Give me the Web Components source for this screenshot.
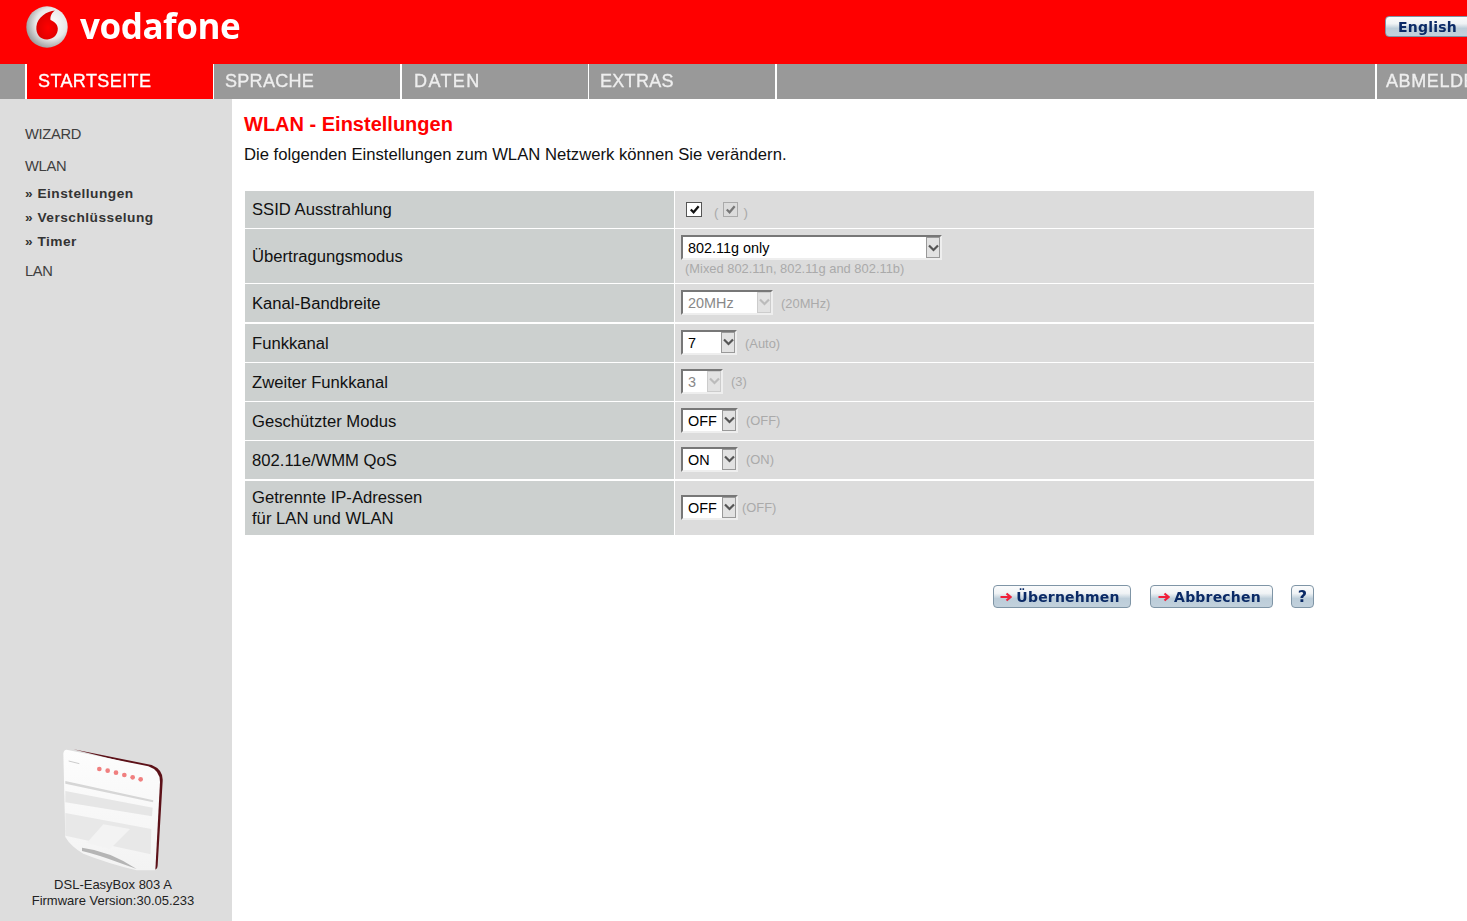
<!DOCTYPE html>
<html lang="de">
<head>
<meta charset="utf-8">
<title>WLAN - Einstellungen</title>
<style>
    html, body { margin: 0; height: 100%; overflow: hidden; background: #fff; }
    body { font-family: "Liberation Sans", Arial, sans-serif; }
</style>
</head>
<body>
<vf-page></vf-page>
<script>
class VfHeader extends HTMLElement {
    connectedCallback() {
        this.attachShadow({ mode: 'open' });
        this.shadowRoot.innerHTML = `
            <style>
                :host { display: flex; height: 64px; background: #f00; justify-content: space-between; overflow: hidden; }
                .logo { display: flex; align-items: flex-start; padding: 6px 0 0 26px; }
                svg { width: 42px; height: 42px; filter: blur(.3px); }
                .word {
                    font: 700 35px/1 "Open Sans", sans-serif;
                    color: #fff; margin: 2px 0 0 12px; letter-spacing: -.45px;
                    filter: blur(.4px);
                }
                .lang { padding: 16px 0 0 0; margin-right: -6px; }
            </style>
            <div class="logo">
                <svg viewBox="0 0 42 42">
                    <defs>
                        <radialGradient id="silver" cx=".6" cy=".42" r=".62">
                            <stop offset="0" stop-color="#fff"/>
                            <stop offset=".6" stop-color="#e8e8e8"/>
                            <stop offset="1" stop-color="#9c9c9c"/>
                        </radialGradient>
                        <radialGradient id="drop" cx=".55" cy=".6" r=".6">
                            <stop offset="0" stop-color="#ff0000"/>
                            <stop offset="1" stop-color="#d80000"/>
                        </radialGradient>
                    </defs>
                    <circle cx="21" cy="21" r="20.7" fill="url(#silver)"/>
                    <path d="M29 4.5C21 5 11.5 11 10.4 20.5 9.5 28.5 15 34 21.5 33.5 28 33 32 28 31.8 22.5 31.6 17.5 27.5 15.5 24.5 14 24 10 26 6.5 29 4.5Z" fill="url(#drop)"/>
                </svg>
                <span class="word">vodafone</span>
            </div>
            <div class="lang"><vf-button wide="88" tall="21" style="padding-right:3px">English</vf-button></div>
        `;
    }
}

class VfNav extends HTMLElement {
    connectedCallback() {
        this.attachShadow({ mode: 'open' });
        this.shadowRoot.innerHTML = `
            <style>
                :host { display: flex; height: 35px; background: #999; overflow: hidden; }
                a {
                    display: block; box-sizing: border-box; flex: none;
                    border-left: 2px solid #fff; padding-left: 11px;
                    font: 18px/34px "Liberation Sans", sans-serif; color: #eee;
                    letter-spacing: .3px; white-space: nowrap;
                }
                a span { filter: blur(.35px); display: inline-block; -webkit-text-stroke: .35px currentColor; }
                .gap { width: 25px; flex: none; }
                .active { background: #f00; color: #fff; width: 188px; letter-spacing: .4px; }
                .fill { flex: 1; border-left: 2px solid #fff; }
            </style>
            <div class="gap"></div>
            <a class="active"><span>STARTSEITE</span></a>
            <a style="width:187px;border-left-width:1px"><span>SPRACHE</span></a>
            <a style="width:188px;padding-left:12px;letter-spacing:1.4px"><span>DATEN</span></a>
            <a style="width:187px;border-left-width:1px"><span>EXTRAS</span></a>
            <div class="fill"></div>
            <a style="width:92px;padding-left:9px;letter-spacing:.6px"><span>ABMELDEN</span></a>
        `;
    }
}

class VfSidebar extends HTMLElement {
    connectedCallback() {
        this.attachShadow({ mode: 'open' });
        this.shadowRoot.innerHTML = `
            <style>
                :host {
                    display: flex; flex-direction: column; justify-content: space-between;
                    width: 232px; flex: none; background: #ddd; box-sizing: border-box;
                    padding: 26px 0 12px;
                    font-family: "Liberation Sans", sans-serif; color: #3f3f3f;
                }
                .menu { padding-left: 25px; }
                .top { font-size: 14.7px; line-height: 18px; letter-spacing: -.3px; }
                .sub { font-size: 13.7px; font-weight: bold; line-height: 24px; letter-spacing: .5px; color: #333; }
                .wlan { margin-top: 14px; }
                .subs { margin-top: 7px; }
                .lan { margin-top: 8px; }
                .device { text-align: center; font-size: 13px; line-height: 16px; color: #222; padding-right: 6px; }
                svg { display: block; width: 110px; height: 130px; margin: 0 0 0 60px; filter: blur(.5px); }
            </style>
            <div class="menu">
                <div class="top">WIZARD</div>
                <div class="top wlan">WLAN</div>
                <div class="subs">
                    <div class="sub">» Einstellungen</div>
                    <div class="sub">» Verschlüsselung</div>
                    <div class="sub">» Timer</div>
                </div>
                <div class="top lan">LAN</div>
            </div>
            <div class="device">
                <svg viewBox="120 30 330 390">
                    <defs>
                        <linearGradient id="body" x1="0" y1="0" x2="0" y2="1">
                            <stop offset="0" stop-color="#fdfdfd"/>
                            <stop offset="1" stop-color="#f3f3f3"/>
                        </linearGradient>
                    </defs>
                    <path d="M160 37 395 84Q430 98 428 132L413 385Q412 398 404 398L390 392 410 130Q405 100 380 92Z" fill="#5c1118"/>
                    <path d="M140 38 385 88Q420 100 420 135L406 400 350 400Q260 378 190 350 152 328 136 300L130 50Q131 38 140 38Z" fill="url(#body)"/>
                    <path d="M136 132 400 190 399 196 136 140Z" fill="#d6d6d6"/>
                    <path d="M136 162 398 212 396 238 136 196Z" fill="#e6e6e6"/>
                    <path d="M136 228 394 276 392 352 136 296Z" fill="#e8e8e8"/>
                    <path d="M250 262 330 276 270 336 200 318Z" fill="#f3f3f3"/>
                    <path d="M186 332Q270 342 350 396L300 378Q230 352 186 342Z" fill="#b5b5b5"/>
                    <g fill="#f07f7f">
                        <circle cx="238" cy="96" r="7"/><circle cx="263" cy="101" r="7"/>
                        <circle cx="288" cy="107" r="7"/><circle cx="313" cy="114" r="7"/>
                        <circle cx="338" cy="121" r="7"/><circle cx="362" cy="127" r="7"/>
                    </g>
                    <path d="M146 72 178 80" stroke="#ccc" stroke-width="3"/>
                </svg>
                <div>DSL-EasyBox 803 A</div>
                <div>Firmware Version:30.05.233</div>
            </div>
        `;
    }
}

class VfRow extends HTMLElement {
    connectedCallback() {
        this.attachShadow({ mode: 'open' });
        const h = this.getAttribute('tall') || 38;
        const gap = this.getAttribute('gap') || 1;
        this.shadowRoot.innerHTML = `
            <style>
                :host {
                    display: grid; grid-template-columns: 429px 1fr; column-gap: 1px;
                    height: ${h}px; margin-bottom: ${gap}px;
                    font: 16.65px/21px "Liberation Sans", sans-serif; color: #111;
                }
                .label { background: #ccd0cf; display: flex; align-items: center; padding-left: 7px; }
                .value { background: #dcdcdc; display: flex; align-items: center; padding-left: 6px; gap: 8px; }
            </style>
            <div class="label"><div><slot name="label"></slot></div></div>
            <div class="value"><slot></slot></div>
        `;
    }
}

class VfSelect extends HTMLElement {
    connectedCallback() {
        this.attachShadow({ mode: 'open' });
        const off = this.hasAttribute('disabled');
        const w = this.getAttribute('wide');
        this.shadowRoot.innerHTML = `
            <style>
                :host {
                    display: flex; box-sizing: border-box; width: ${w}px; height: 25px; flex: none;
                    margin-bottom: 2px;
                    background: #fff; border-style: solid; border-width: 2px;
                    border-color: #777 #eee #eee #777;
                    font: 14.4px/22px "Liberation Sans", sans-serif; color: ${off ? '#888' : '#000'};
                    justify-content: space-between;
                }
                .text { padding-left: 5px; }
                .arrow {
                    box-sizing: border-box; width: 14px; height: 21px; flex: none;
                    background: #e2e2e2; border: 1px solid ${off ? '#ccc' : '#999'};
                    display: flex; align-items: center; justify-content: center;
                }
                svg { width: 11px; height: 8px; }
            </style>
            <span class="text"><slot></slot></span>
            <span class="arrow"><svg viewBox="0 0 11 8"><path d="M1 1.5 5.5 6 10 1.5" fill="none" stroke="${off ? '#bbb' : '#555'}" stroke-width="2.2"/></svg></span>
        `;
    }
}

class VfCheck extends HTMLElement {
    connectedCallback() {
        this.attachShadow({ mode: 'open' });
        const off = this.hasAttribute('disabled');
        this.shadowRoot.innerHTML = `
            <style>
                :host {
                    display: inline-block; box-sizing: border-box; width: ${off ? 15 : 16}px; height: 15px;
                    background: ${off ? '#dcdcdc' : '#fff'}; border: 1px solid ${off ? '#aaa' : '#555'};
                    vertical-align: middle;
                }
                svg { display: block; width: 13px; height: 13px; margin-left: ${off ? 0 : .5}px; }
            </style>
            <svg viewBox="0 0 14 13"><path d="M3 6.5 6 9.5 11.5 3" fill="none" stroke="${off ? '#777' : '#111'}" stroke-width="2.4"/></svg>
        `;
    }
}

class VfHint extends HTMLElement {
    connectedCallback() {
        this.attachShadow({ mode: 'open' });
        this.shadowRoot.innerHTML = `
            <style>
                :host { display: inline-block; font: 12.9px/16px "Liberation Sans", sans-serif; color: #aaa; white-space: nowrap; }
            </style>
            <slot></slot>
        `;
    }
}

class VfButton extends HTMLElement {
    connectedCallback() {
        this.attachShadow({ mode: 'open' });
        const w = this.getAttribute('wide');
        const h = this.getAttribute('tall') || 23;
        const withArrow = this.hasAttribute('arrow');
        const arrow = withArrow ? `
            <svg viewBox="0 0 12 10"><path d="M0.5 5H10M6.5 1.5 10.5 5 6.5 8.5" fill="none" stroke="#f0203a" stroke-width="2.2"/></svg>` : '';
        this.shadowRoot.innerHTML = `
            <style>
                :host {
                    display: inline-flex; box-sizing: border-box; align-items: center; justify-content: center;
                    width: ${w}px; height: ${h}px; gap: 4px; flex: none;
                    padding-right: ${withArrow ? 4 : 0}px;
                    border: 1px solid #7f95a6; border-radius: 4px;
                    background: linear-gradient(#fafbfc 0%, #f0f3f5 35%, #bccdd9 60%, #c2d1dc 100%);
                    font: bold 14px/1 "DejaVu Sans", Verdana, sans-serif; letter-spacing: .2px; color: #0b2a66;
                }
                span { filter: blur(.3px); }
                svg { width: 12px; height: 10px; flex: none; }
            </style>
            ${arrow}<span><slot></slot></span>
        `;
    }
}

class VfPage extends HTMLElement {
    connectedCallback() {
        this.attachShadow({ mode: 'open' });
        this.shadowRoot.innerHTML = `
            <style>
                :host { display: flex; flex-direction: column; height: 921px; overflow: hidden; font-family: "Liberation Sans", sans-serif; }
                .main { display: flex; flex: 1; min-height: 0; }
                .content { width: 1082px; padding: 13px 0 0 12px; }
                h1 { margin: 0; font: bold 20px/24px "Liberation Sans", sans-serif; color: #f00; }
                p { margin: 8px 0 0; font: 16.67px/21px "Liberation Sans", sans-serif; color: #111; }
                .table { margin: 26px 0 0 1px; width: 1069px; }
                .actions { display: flex; justify-content: flex-end; align-items: center; margin-top: 50px; width: 1070px; }
                .actions .ok { margin-right: 19px; }
                .actions .help { margin-left: 18px; font-size: 16px; }
                .stack { display: flex; flex-direction: column; align-items: flex-start; }
                .stack vf-select { margin-bottom: 0; }
                .stack vf-hint { margin: 1px 0 0 4px; }
                .low { margin-top: 2px; }
                .paren { color: #aaa; font-size: 13.3px; margin-top: 6px; }
                .chk { display: flex; align-items: center; margin-left: 5px; }
                .chk vf-check:first-child { margin-right: 12px; }
                .chk .mid { margin: 0 5px 0 5px; }
            </style>
            <vf-header></vf-header>
            <vf-nav></vf-nav>
            <div class="main">
                <vf-sidebar></vf-sidebar>
                <div class="content">
                    <h1>WLAN - Einstellungen</h1>
                    <p>Die folgenden Einstellungen zum WLAN Netzwerk können Sie verändern.</p>
                    <div class="table">
                        <vf-row tall="37">
                            <span slot="label">SSID Ausstrahlung</span>
                            <div class="chk"><vf-check></vf-check><span class="paren">(</span><vf-check class="mid" disabled></vf-check><span class="paren">)</span></div>
                        </vf-row>
                        <vf-row tall="54">
                            <span slot="label">Übertragungsmodus</span>
                            <div class="stack"><vf-select wide="261">802.11g only</vf-select><vf-hint>(Mixed 802.11n, 802.11g and 802.11b)</vf-hint></div>
                        </vf-row>
                        <vf-row gap="2">
                            <span slot="label">Kanal-Bandbreite</span>
                            <vf-select wide="92" disabled>20MHz</vf-select><vf-hint class="low">(20MHz)</vf-hint>
                        </vf-row>
                        <vf-row>
                            <span slot="label">Funkkanal</span>
                            <vf-select wide="56">7</vf-select><vf-hint class="low">(Auto)</vf-hint>
                        </vf-row>
                        <vf-row>
                            <span slot="label">Zweiter Funkkanal</span>
                            <vf-select wide="42" disabled>3</vf-select><vf-hint>(3)</vf-hint>
                        </vf-row>
                        <vf-row>
                            <span slot="label">Geschützter Modus</span>
                            <vf-select wide="57">OFF</vf-select><vf-hint>(OFF)</vf-hint>
                        </vf-row>
                        <vf-row gap="2">
                            <span slot="label">802.11e/WMM QoS</span>
                            <vf-select wide="57">ON</vf-select><vf-hint>(ON)</vf-hint>
                        </vf-row>
                        <vf-row tall="54">
                            <span slot="label">Getrennte IP-Adressen<br>für LAN und WLAN</span>
                            <vf-select wide="57">OFF</vf-select><vf-hint style="margin-left:-4px">(OFF)</vf-hint>
                        </vf-row>
                    </div>
                    <div class="actions">
                        <vf-button class="ok" wide="138" arrow>Übernehmen</vf-button>
                        <vf-button wide="123" arrow>Abbrechen</vf-button>
                        <vf-button class="help" wide="23">?</vf-button>
                    </div>
                </div>
            </div>
        `;
    }
}

customElements.define('vf-button', VfButton);
customElements.define('vf-header', VfHeader);
customElements.define('vf-nav', VfNav);
customElements.define('vf-sidebar', VfSidebar);
customElements.define('vf-row', VfRow);
customElements.define('vf-select', VfSelect);
customElements.define('vf-check', VfCheck);
customElements.define('vf-hint', VfHint);
customElements.define('vf-page', VfPage);
</script>
</body>
</html>
